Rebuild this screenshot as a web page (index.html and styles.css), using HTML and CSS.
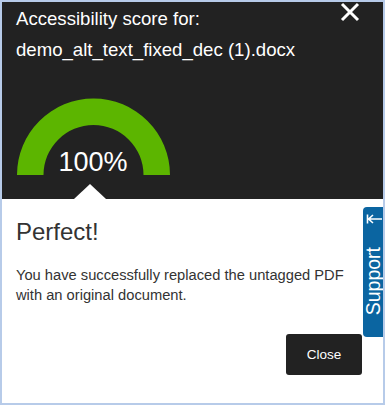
FILE: index.html
```html
<!DOCTYPE html>
<html lang="en">
<head>
<meta charset="utf-8">
<title>Accessibility score</title>
<link rel="stylesheet" href="styles.css">
</head>
<body>
<div class="frame">
  <section class="header">
    <div class="header-top">
      <div class="title">
        <div class="title-line">Accessibility score for:</div>
        <div class="title-line">demo_alt_text_fixed_dec (1).docx</div>
      </div>
      <button class="close-x" aria-label="Close">
        <svg width="20" height="20" viewBox="0 0 20 20"><path d="M2 2 L18 18 M18 2 L2 18" stroke="#fff" stroke-width="3" fill="none"/></svg>
      </button>
    </div>
    <div class="gauge">
      <svg class="arc" width="153" height="77" viewBox="0 0 153 77"><path d="M0 77 A76.5 76.5 0 0 1 153 77 L126.5 77 A50 50 0 0 0 26.5 77 Z" fill="#5cb500"/></svg>
      <div class="score">100%</div>
    </div>
    <div class="pointer"></div>
  </section>
  <section class="content">
    <h2 class="result">Perfect!</h2>
    <p class="message">You have successfully replaced the untagged PDF with an original document.</p>
    <div class="actions">
      <button class="close-btn">Close</button>
    </div>
  </section>
  <div class="support">
    <svg class="support-icon" width="16" height="10" viewBox="0 0 16 10"><path d="M1.5 0.5 V9.5 M2 5 H16 M7 1 L2.6 5 L7 9" stroke="#fff" stroke-width="1.6" fill="none"/></svg>
    <span class="support-text">Support</span>
  </div>
</div>
</body>
</html>
```
FILE: styles.css
```css
* { box-sizing: border-box; }
html, body { margin: 0; padding: 0; background: #fff; }
body { font-family: "Liberation Sans", Arial, sans-serif; }

.frame {
  position: relative;
  width: 385px;
  height: 405px;
  border: 2px solid #b7cbe9;
  overflow: hidden;
  background: #fff;
}

.header {
  position: relative;
  height: 197px;
  background: #222222;
  color: #fff;
}

.header-top {
  display: flex;
  justify-content: space-between;
  align-items: flex-start;
  padding: 1.4px 23px 0 14px;
}

.title-line {
  font-size: 18.6px;
  line-height: 31px;
  white-space: nowrap;
}

.close-x {
  margin: -1px 0 0 0;
  padding: 0;
  border: 0;
  background: none;
  width: 20px;
  height: 20px;
  display: block;
}
.close-x svg { display: block; }

.gauge {
  display: grid;
  width: 153px;
  height: 77px;
  margin: 33px 0 0 14.5px;
}
.gauge > * { grid-area: 1 / 1; }
.arc { display: block; }
.score {
  align-self: end;
  justify-self: center;
  font-size: 27px;
  line-height: 27px;
  margin-bottom: -1px;
}

.pointer {
  position: absolute;
  left: 72px;
  bottom: 0;
  width: 0;
  height: 0;
  border-left: 16px solid transparent;
  border-right: 16px solid transparent;
  border-bottom: 15px solid #fff;
}

.content {
  padding: 0 16px 0 14px;
  color: #333;
}

.result {
  margin: 19.4px 0 0 0;
  font-size: 24px;
  font-weight: normal;
  line-height: 28px;
}

.message {
  margin: 18.6px 0 0 0;
  font-size: 14.7px;
  line-height: 20px;
}

.actions {
  display: flex;
  justify-content: flex-end;
  margin-top: 29px;
  padding-right: 5px;
}

.close-btn {
  width: 76px;
  height: 41px;
  background: #222;
  color: #fff;
  border: 0;
  border-radius: 3px;
  font-family: "Liberation Sans", Arial, sans-serif;
  font-size: 13.5px;
  padding: 0;
}

.support {
  position: absolute;
  right: 0;
  top: 205px;
  width: 20px;
  height: 130px;
  background: #0b65a1;
  border-radius: 4px 0 0 4px;
  display: flex;
  flex-direction: column;
  align-items: flex-start;
  padding-top: 7px;
}
.support-icon { display: block; margin-left: 3px; }
.support-text {
  writing-mode: vertical-rl;
  transform: rotate(180deg);
  color: #fff;
  font-size: 19.5px;
  line-height: 20px;
  margin-top: 23px;
}
```
